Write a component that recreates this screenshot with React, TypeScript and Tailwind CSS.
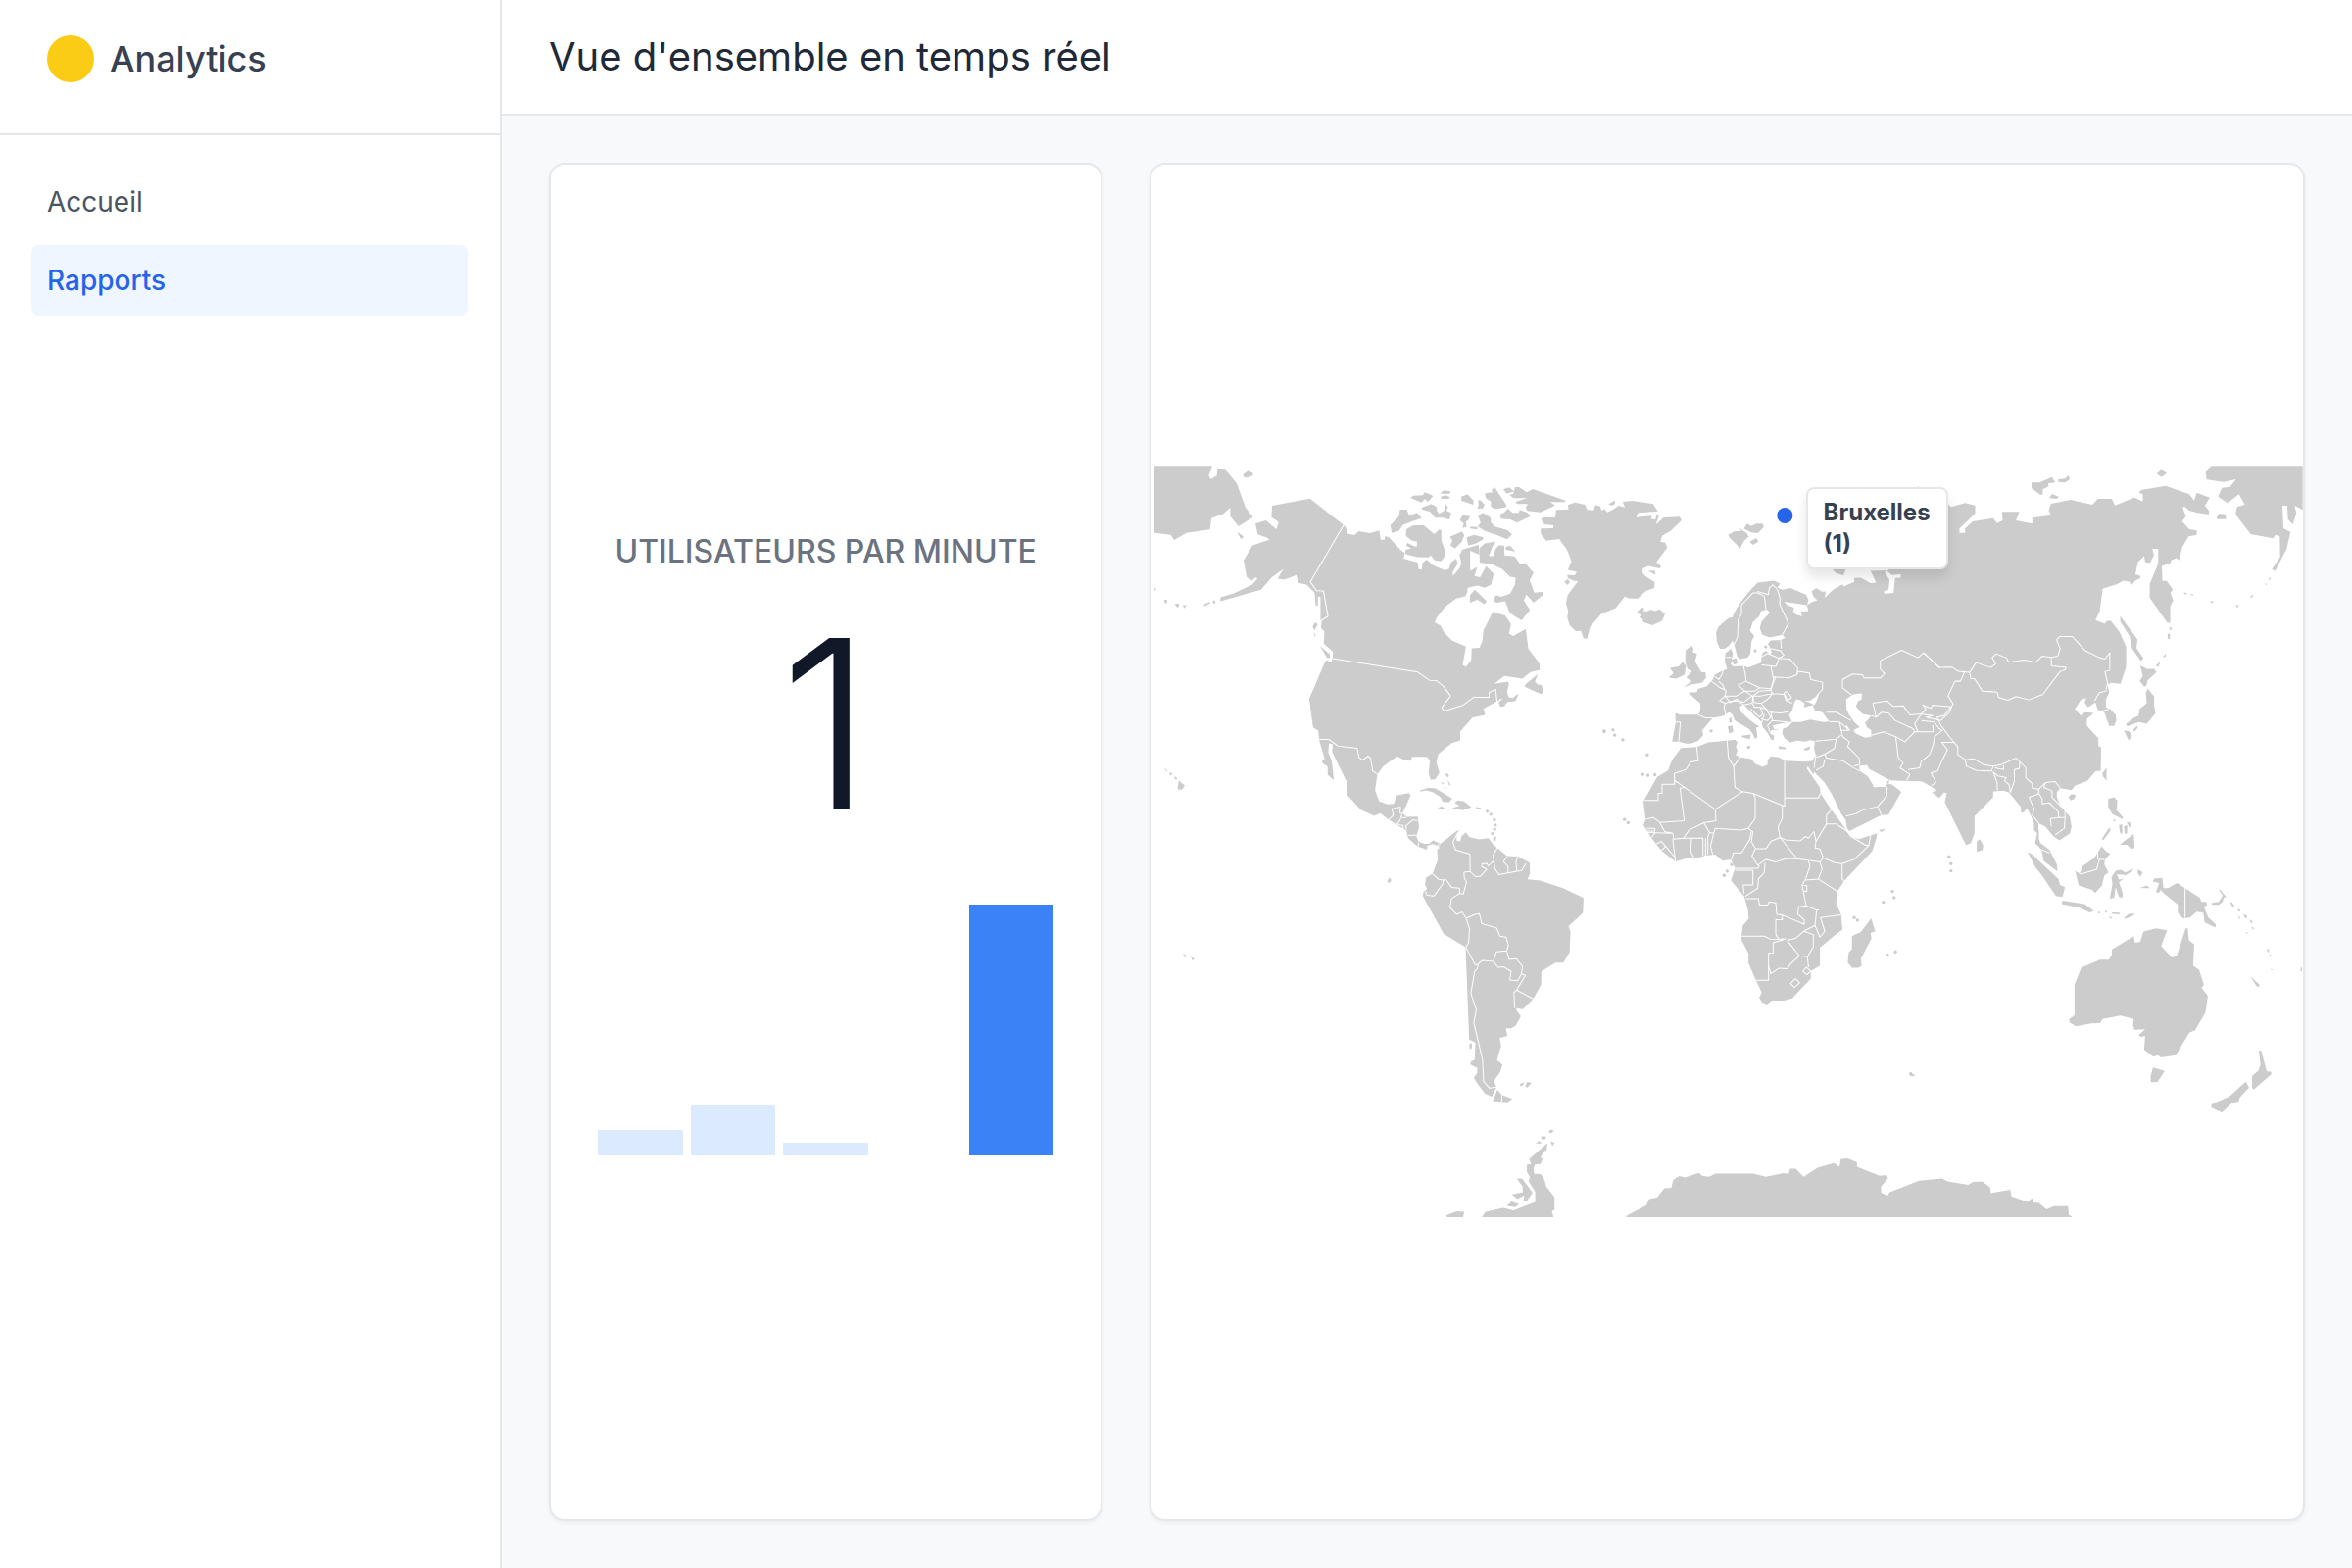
type Region = {
  name: string;
  transform: string;
  land: string[];
  water?: string;
  borders?: string;
  islets?: number[][];
};

const regions: Region[] = [
  {
    name: "alaska",
    transform: "translate(-6 -16) scale(0.33333)",
    land: [
      "M24 49L201 49L190 75L196 87L215 76L217 56L241 58L275 98L303 174L326 203L281 231L256 200V174L235 193L198 206L194 241L122 251L84 273L74 257L24 251Z",
      "M295 73L311 60L325 68V76L311 81L299 82Z",
      "M277 248L296 262L292 270L286 266Z",
      "M384 168L500 146L603 227L501 401L520 428L541 429L555 506L536 519L532 519V447L524 446V474L517 474L514 434L489 409L464 404L458 380L422 394L401 391L418 362L384 386L350 425L226 460V448L265 437L323 409L339 391L333 387L323 397L306 386L297 335L324 289L375 272L370 266L340 256L333 223L365 213L397 240L404 218L382 203Z",
      "M175 470L194 462V467L177 476ZM202 458h8v9h-6ZM110 472L123 472L115 482ZM86 468h13v8l-6 4ZM54 456h8v10h-7ZM24 419l6 5l-6 4Z",
      "M512 529L519 525L523 533L514 549L508 540ZM511 552L518 568L514 568ZM530 597L560 622L562 635L551 633L541 615Z",
      "M54 970L64 979L60 981ZM69 986L76 984L78 992L72 993ZM84 996l8 3v7l-5-1ZM98 1009L117 1024L108 1037H98L95 1034Z",
    ],
    borders: "M603 227L501 401L520 428L541 429L555 506L533 520",
  },
  {
    name: "canada",
    transform: "translate(244 -16) scale(0.33333)",
    land: [
      "M-147 227L-140 235L-134 254L-114 258L-101 246L-67 252L-38 244L-34 272L-22 272L-21 262L-9 264L26 302L40 313L36 330L80 342L82 362L92 363L94 343L107 333L126 350L163 366L175 361L181 342L197 330L202 345L186 372L188 382L208 358L213 343L207 318L220 303L234 297L240 305V367L262 355L253 383L270 387L289 353L312 376L304 409L284 419L263 412L232 419L231 434L225 445L197 452L164 477L140 507L131 525L150 535L159 554L184 580L227 599L217 655L227 661L243 641L245 604L268 603L277 583L281 549L309 493L347 504L365 530L359 559L372 567L410 545L418 606L452 651L453 670L425 677L400 697L344 689L314 713L356 706L359 712L353 736L357 753L371 756L384 745L388 746L378 766L354 768L344 782L332 783L327 770L340 757L324 762L279 789L286 806L247 815L208 856L-225 856L-240 847L-252 757L-205 657L-200 640L-185 648L-181 633L-180 615L-208 590L-206 553L-217 541L-214 520L-195 506L-208 429L-230 428L-249 401Z",
      "M57 144L66 137L95 136L101 127L127 138L114 153L109 156L102 147L91 158Z",
      "M152 127L160 121L180 124L177 131L150 131ZM149 141L165 136L177 141L175 147H153Z",
      "M92 174L121 163L138 172V183L145 193L160 184L165 163L172 172L168 184L182 190L177 210L165 208L158 205H132L118 187L93 179Z",
      "M-4 227L22 200L25 180H46L54 199L77 190L92 206L64 215L34 227L22 245L0 251Z",
      "M45 240L64 229L97 227L130 255L146 240L152 244V275L163 305V322L151 338L132 335L119 320L113 326L80 325L42 316V303L60 298L44 290L48 282L70 292L77 292V277L62 275L43 260Z",
      "M213 140L232 133L250 152V165L213 153ZM264 150L273 153L284 165L279 176L262 177L266 165Z",
      "M285 130L309 127L305 120L315 112L349 163L351 172L331 176L314 178L303 170L304 155L288 145Z",
      "M341 118L359 112L375 124L352 131Z",
      "M377 111H389L413 127L432 117L531 152L531 157L485 157L500 167L455 188L415 184L410 175L416 163L383 163L379 156L414 145L372 145L360 134L372 131Z",
      "M331 195L345 188L355 177L370 190L388 190L392 181L416 190L424 200L411 207L383 220L363 210L334 208Z",
      "M208 212L217 197L240 200L233 213L227 216L229 233L217 236L220 222ZM240 232L262 233L262 241L240 238Z",
      "M264 198L280 190L303 205V218L315 232L354 243L368 256L353 271L322 258L285 245L263 232L272 220Z",
      "M178 263L215 247L222 259L214 279L194 298L179 290L186 275Z",
      "M229 265L252 257L278 264L281 270L258 283L234 289Z",
      "M214 303L266 288L268 318L240 306L212 322Z",
      "M268 298L285 283L318 277L307 295L297 322H310L318 300L328 289L344 290L345 320L376 323L394 348L408 343L434 373L422 396L436 434L461 432L463 441L434 465L412 440L404 458L423 487L397 519L361 496L347 460L323 465L313 462L311 452L320 442L335 447L362 437L377 410L379 388L362 385L338 362L306 347L269 342Z",
      "M347 295L362 290L378 308L350 303Z",
      "M239 442L254 425L291 460L283 469L262 456L239 465Z",
      "M447 683L438 708L449 716H458L464 734L458 745L407 722L409 715Z",
      "M457 209L466 203L500 204L503 181L541 179L539 166L560 158L592 165L598 181L618 182L623 166L638 170L642 183L650 178L660 188L680 178L694 168L713 173L707 156L736 153L800 163L814 185L754 190L748 203L796 199L793 208L806 211L811 196L818 197L808 226L832 204L881 202L887 213L851 247L827 260L822 279L836 280L843 296L810 340L817 348L825 354L819 360L786 352L768 360L767 372L775 383L805 402L803 420L777 429L753 452L725 451L713 446L685 481L641 499L607 538L598 574H587L579 551L563 552L544 533L537 510L540 490L533 467L538 442L570 399L557 398L539 390L537 380L560 381L566 370L539 364L550 338L536 302L512 270L472 275L456 254V238L494 237L495 228L467 225Z",
      "M663 163L683 152L683 163L672 168ZM528 401L539 392L545 402L538 411ZM785 368L804 366L808 380Z",
      "M749 495L764 480L773 482L770 492L785 490L791 486L806 490L820 485L836 500L827 520L797 534L768 523L769 515L757 510L763 502Z",
    ],
    islets: [[650, 857], [677, 854], [682, 870], [707, 884]],
  },
  {
    name: "americas",
    transform: "translate(144 184.667) scale(0.33333)",
    land: [
      "M95 45L48 157L60 245L75 252L78 283L95 341L87 345L88 354L104 364V389L123 406L117 350L106 320L108 293L119 295L118 321L164 414V451L205 496L246 515L265 507L290 526L317 543L345 560L350 583L378 608L408 618L409 606L426 601L440 606L443 616L449 600L427 590L414 600L400 600L383 594L375 577L384 549L379 517L345 518L333 507L341 490L358 452L352 445L314 453L307 478L287 480L261 470L249 436L256 388L273 364L316 333L340 345L359 346L362 334H408L417 346L413 384L419 404L433 403L446 382L436 350L443 325L484 292L510 284L509 257L547 214L585 206L580 187L630 160L600 130L480 60L119 34L115 48Z",
      "M387 437L412 429L434 431L485 462L476 473L456 472L450 458L425 442L405 437L387 441ZM492 475L502 468L520 470L544 489L518 498L484 491L508 484ZM441 490L452 486L462 491L452 495ZM558 488L573 490V495H559Z",
      "M462 387L470 385L476 393L472 397ZM451 410L460 415L455 419ZM471 404L481 422L474 419ZM459 427L467 429L464 434ZM482 430L488 439Z",
      "M286 717L293 703L299 712L292 720ZM610 580L619 578V590L612 592Z",
      "M443 616L449 600L500 560L508 558L498 575L499 591L510 593L513 578L527 565L538 580L568 587L596 583L610 602L623 613L653 638L686 639L722 658L723 690L716 709L754 713L826 737L887 766L885 812L841 852L847 870L844 933L825 964H801L758 991L757 1031L733 1075L701 1107L684 1103L680 1108L695 1128L679 1157L665 1165L649 1165L654 1188L630 1195L635 1218L622 1262L639 1276L632 1298L612 1327L621 1345L606 1374L585 1364L561 1333L551 1316L561 1303L562 1287L540 1275L543 1266L554 1261L556 1208L537 1199L526 917L459 876L395 760L397 747L408 738L402 727L405 704L425 692L441 649L439 617Z",
      "M623 1353L637 1369L669 1381L655 1391L609 1388ZM537 1215L543 1208L545 1215V1225L539 1230ZM691 1336L707 1330L700 1340L694 1342ZM715 1329L728 1332L715 1346L708 1342Z",
    ],
    borders:
      "M119 34L380 75L415 100L438 102L458 118L480 148L453 184L461 194L517 177L551 152H598V138L618 128L622 165M78 281H108L135 301L194 308L200 337L211 344L228 332L235 338L242 378L257 388M300 493L327 488L325 505L332 507M300 493L305 513L290 527M332 507L328 520H345M328 523L315 543M318 540L335 545V555M345 557L343 545L365 527L379 530M350 574H375M383 597L380 608M443 600V616M506 560L487 594L495 619L539 632L540 685L555 700H571L591 678L576 670V661L591 660L595 668L613 652L610 635L623 613M613 652L615 675L628 695L683 684L697 683L711 660M653 640L642 655L656 670V688M686 639L680 655L683 684M540 685L521 687L522 705L529 717L519 754L508 752L507 736L484 734L466 710L457 711L443 709L425 692M457 711V722L429 760L408 758L403 745M508 752L483 768L478 795L498 816L515 809L528 828L538 860L535 903L527 917M528 828L553 817L568 814L576 845L621 858L631 883L650 886L657 910L652 928L620 931L611 960L577 957L564 969L555 970L527 917M652 928L659 954L682 952L700 976L697 998L709 1003L682 1048L674 1055L676 1103M611 960L625 978L643 977L665 990L661 1017L685 1019L697 998M682 1048L733 1075M564 969L562 982L554 990L542 1058L559 1108L551 1147L578 1262L581 1327L599 1348L621 1345M637 1369V1390",
    islets: [[592, 501], [603, 510], [614, 527], [617, 543], [615, 556], [608, 569], [950, 257]],
  },
  {
    name: "europe",
    transform: "translate(484 4) scale(0.33333)",
    land: [
      "M179 550L198 537L203 546L201 556L214 561L208 584L223 610L228 618H240L242 634L229 650L196 655L173 663L198 645L181 634L199 614L185 608L178 585Z",
      "M127 634L142 620L131 604L158 600L170 586L180 597L176 625L150 637Z",
      "M147 745L152 743L160 747L217 747L224 737V713L187 680L213 678L217 668L243 661L262 640L268 625L294 612L306 608L299 583L301 560L318 545L324 560L320 575L323 583L317 592L325 600L356 598L369 603L381 600L411 588V572L415 558L425 552L437 562L443 558L436 540L431 530L440 520L470 519L484 512L475 503L437 511L413 502L406 482L412 462L437 435L428 426L410 430L404 447L385 463L376 490L389 507L381 522L377 560L369 573L345 577L337 570L331 545L323 520L313 535L298 546H284L275 525L272 497L279 479L310 452L322 450L330 432L347 404L381 362L400 343L450 337L468 346L460 358L474 365L500 360L547 380L555 395L551 412L481 402L490 412L511 420L508 430L515 440L535 447L532 432L555 430L550 412L568 402L582 397L570 385L565 370L578 360L597 371L608 370L605 390L630 365L660 348L661 355L696 341L694 329L715 328L745 345L762 343L745 307L1080 300V952H868L840 982L800 1053L778 1055L680 1103L673 1095L669 1070L655 1050L627 992L604 955L575 925L565 892L577 870L572 850L575 828L560 825L545 830L520 827L500 832L482 820L475 805L477 790L494 783L507 768L495 770L470 775L445 780L452 796L466 790L440 795L437 805L450 812L448 826L440 822L431 805L415 785L412 770L390 750L370 730L357 717L345 722L348 738L378 765L405 785L395 787L399 815L392 822L384 805L372 790L330 765L321 745L312 740L296 750L264 757L255 765L230 795L233 810L216 828L195 836L180 836L158 830H138L143 800L149 770Z",
      "M350 812L378 808L376 822L352 816ZM308 783L322 780L325 800L312 805ZM312 760L319 755L321 770L314 773ZM462 843L487 848L485 853L465 852ZM540 852L562 843L556 855L545 857ZM322 578L335 575L338 590L326 595Z",
      "M309 197L328 187L350 185L340 175L366 192L372 203L358 215L345 240L336 228L315 208ZM357 178L368 163L380 170L395 163L414 163L419 173L400 192L380 190ZM375 218L395 207L402 218L385 228ZM625 300H670L662 321L640 315ZM882 54L890 49L900 54Z",
    ],
    water:
      "M505 770L495 748L505 735L511 712L518 700L530 703L543 712L541 725L568 718L575 735L598 740L618 768L600 770L560 762L530 770ZM543 706L560 704L587 686L580 705L573 718L555 708ZM670 700L692 685L718 682V700L707 706L700 722L712 735L720 745L747 750L735 765L728 770L733 785L747 795L747 815L728 818L700 805L692 795L712 785L695 770L678 745L671 730ZM795 307L810 320L837 318V328L820 330L815 375L787 377L785 370L800 365L803 335L788 310ZM710 903L735 902L740 913L780 935L806 948L840 950L900 952L840 984L812 962L800 958L803 946L795 952L790 965L757 970L742 945L735 935L712 920Z",
    borders:
      "M217 747L240 757L264 757M149 770H163L158 830M258 645L285 665L303 673L300 690L283 705L300 712L297 725L302 748M268 630L280 640L290 625L294 612M280 645L292 655L300 673M303 572H318M356 598L362 625L364 645L340 657L360 675L335 690L310 690L300 690L315 710L335 700L355 710L383 690L360 675M300 712L320 706L335 705L357 717L383 712L385 690M364 645L385 655L405 665L390 675L360 675M405 665L440 668L448 640L440 598L411 595M385 690L405 675L440 672L445 683L410 690L385 690L388 710L410 713L430 700L445 683L480 685L487 705L505 712M410 713L425 730L440 740L470 742L495 738M480 680L490 677L503 695L492 705L480 680M448 632L495 635L520 625L523 615L558 620L562 640L598 648V670L580 690M440 672L445 655L455 632M440 598L455 600L465 575L498 577L522 605L520 625M412 570L430 560L465 575M438 545L470 552L480 565L465 575M470 519L472 545M383 712L390 725L408 725L415 745L405 755L378 730M408 725L425 730L440 755L430 765L410 760M440 740L445 765L430 780L437 800M445 765L490 770M420 745L412 770M326 535L338 510L340 455L350 440L350 412L385 375L398 375L420 385L425 425M398 370L432 380L435 360L447 350L460 365L468 390L467 410L494 468L475 503M687 687L659 665V640L690 623L720 625L725 635L775 635L788 622L775 608V582L840 550L890 573L907 558L957 604M610 740L640 740L685 765M618 768L650 770L680 795M650 770L655 795L680 795L670 780M655 795L660 815L680 830L675 845L710 880L712 900M577 828L640 822L655 810M640 822L635 850L605 868L580 878M605 868L610 880L660 888L695 912M605 885L600 905L578 918M695 905L710 900M697 912L712 920M578 870L572 910M752 966L788 967L798 955M795 968V995L767 1028L720 1040L700 1050L669 1058M767 1028L778 1055M762 755L752 712L795 705L815 722L845 720L865 748L900 745M747 750L762 755L778 740L800 742L820 765L875 790L880 800M747 810L785 800L822 815L850 830L880 800L937 800M822 815L830 880L845 895L835 910L865 930L855 950M860 915L895 910L900 890L925 870L937 840L940 815L965 795M900 745L915 730L905 718L930 728L935 718L993 723L985 742L960 765L915 755L935 750L900 745L880 775L890 800M900 765L940 770L955 790L965 795M937 800L935 780M1000 832H963L980 855L965 885L950 920L930 925L945 955L930 965",
    islets: [[257, 797], [372, 847], [392, 552], [424, 540], [62, 870], [48, 930], [64, 933], [85, 931]],
  },
  {
    name: "africa",
    transform: "translate(484 244) scale(0.33333)",
    land: [
      "M165 129L213 126L248 112L306 107L330 104L338 112L333 125L338 138L332 150L350 158L380 163L392 177L415 187L430 180V165L440 155L465 158L483 168L545 171L568 168L577 195L570 210L553 185L550 192L590 250L592 268L625 318L660 365L665 373L682 400L710 408L765 390L763 405L750 445L665 535L642 570L640 605L655 640L659 685L632 705L590 740L590 795L562 812V835L505 895L480 902H443L428 914L413 907L404 893L412 878L390 830L371 787L372 758L350 717V705L354 673L372 652L370 625L358 583L318 535L328 503L331 497L325 485L318 470L292 474L270 455L240 458L205 469L190 464L148 477L105 443L75 405L50 365L57 350L50 293L92 218L125 198L138 165Z",
      "M747 650L759 690L745 695L748 712L715 775L718 795L708 802H688L675 785L678 755L688 745V705L715 692Z",
      "M770 380L792 376L778 386ZM862 1124L870 1120L874 1127L882 1130L876 1134L866 1133Z",
    ],
    borders:
      "M213 126L218 168L195 172L180 195L145 207V240H107V268H95V290H52M145 228L270 317L353 263L330 250L326 185L310 160L306 107M326 185L348 155M162 252L178 250M162 252L175 352L100 357L80 342L57 347M270 317L272 352L235 358L190 380L172 405L143 408L140 390L60 388M235 358L252 388L265 390L270 375L350 380L370 375L392 345V280L385 268L353 263M385 268L480 307M482 168V307H475V345L462 370L468 403L440 415L425 437H393L380 415L385 385L370 375M482 282H585L592 268M380 385L375 410L350 450H325L320 470M393 437L382 460L400 488L425 470L455 478L485 468L520 468L590 478M468 403L520 468M468 403L485 410L530 413L545 400L555 405L572 385L578 415L575 435L590 438L600 465L590 478L597 500L585 530L642 567M578 415L610 362H640L660 375L680 390L685 400L730 427H740L695 470L658 483L635 480L600 465M610 362V335L625 318M745 395L740 427M658 483V530L665 537M585 530L545 533L560 490L555 475M545 533L535 548L548 612L525 615L522 637L542 655V668L475 640L458 638L455 603L435 600L430 610H405L402 590H362M535 550H550V568H538M362 583L400 558L402 530L420 510L422 480M330 503L385 503V548H355L358 575M331 497L400 497L405 488M475 640V655H455V700L463 712M350 705H420L440 715L485 713L447 725V757H433V840H395M433 795L440 820L465 803L490 805L500 790L527 765L490 718L515 712L540 690L570 700V738L552 768L527 765M552 768L555 800M540 690L575 672L580 625L548 612M580 625H587M575 672L590 708L605 690L592 648L655 640M500 850L515 835L528 848L512 862ZM538 812L548 800L562 812L550 823ZM60 375H85V383H60M80 342L100 357L115 385L140 390M140 408L143 435L148 477M75 403L85 390M85 425L105 415L118 430L148 465M105 443L118 430M197 403L195 445L205 469M172 405H232V458M240 405V458M252 388L247 400V455M265 390L255 430L262 455",
    islets: [[812, 568], [817, 587], [784, 601], [695, 648], [705, 656], [797, 763], [821, 753], [320, 486], [306, 506], [297, 519], [3, 358], [-8, 348]],
  },
  {
    name: "siberia",
    transform: "translate(784 -16) scale(0.33333)",
    land: [
      "M60 140L91 172L134 160L165 167V192L117 238V251H134V238L158 216L220 206L232 221L249 213L247 187H300L290 213L340 223V205L397 197L390 182L397 162L457 150L524 165L540 147H583L593 167L652 143L678 155V133L666 128L672 120L748 107L820 133L835 152L843 128L883 143L868 168L880 183V195L845 190L820 183L805 170L800 175L810 200L798 216L820 240L843 244V257L818 262L798 295L790 335L780 328L765 335L762 345L736 352L738 398L751 398L770 425L762 435L771 457L762 475V527L752 525L699 450V408L725 345V300H707L712 320L700 343L685 340L682 322L663 340L655 378L670 382V390L655 397L642 412L637 400L618 397L600 408L555 422L546 492L533 518L562 529L567 520L580 520L607 555L627 600V660L610 713L580 710L570 715L575 740L565 760V785L578 790L595 808L597 825L590 842H575L560 800L550 795L540 793L533 770L510 785L500 770L505 757L490 760L470 790L490 812L500 800L528 802L507 820L506 845L542 880V905L549 907L550 940L549 980H50L0 860L-100 700V300L60 200Z",
      "M609 505L662 578L658 603L680 635L672 643L645 605L638 568L609 522Z",
      "M670 657L692 668L712 667L720 677L692 703L690 716L683 722L668 705L678 690ZM693 728L713 752L712 775L717 803L690 835L665 830L630 843L627 835L650 817L665 810L668 790L690 772L687 740ZM648 855L660 840L662 848L652 860ZM620 855L637 858L645 872L635 887Z",
      "M718 657L733 643L725 662ZM738 633L748 620V630ZM754 560h7v15h-7ZM758 540l10 2-6 9ZM803 432l12 6-8 2ZM822 438l12 2-4 4ZM883 460h12l-5 7ZM962 472h10l-5 9ZM1005 448L1018 438L1012 450ZM1052 405l6 2-3 4ZM1062 393l6-8v12Z",
      "M337 97L362 97L400 80L410 97L388 100L390 108L372 118V133L365 135L338 115ZM418 88L440 85L450 75L455 87L440 97L420 95ZM392 145L400 132L420 140L415 147ZM720 70L735 58L752 68L735 80ZM904 203L912 192L932 195V209H905Z",
      "M888 49H1167V180L1142 168L1148 190L1137 225L1122 210L1120 168H1105L1108 237L1130 248L1118 300L1083 368L1073 362L1098 325L1097 262L1083 257L1077 268L1008 255L962 195L966 172L990 165L972 133L937 160L908 140L920 113L945 110L963 87L925 95L873 88L870 65Z",
    ],
    borders:
      "M148 678L168 648L212 663L228 652L217 633L229 621L260 633L268 647L315 640L350 647L370 628L398 632V658L443 663L440 670L425 675L372 745L330 762L290 752L265 763L237 755L232 738L187 735L163 697H152ZM398 632L418 628L425 605L414 578L424 568H462L500 610L545 633L562 637L577 618V672L562 675L570 710L565 735L545 740L530 765M8 618L55 663L95 662L113 675L148 678M555 795L575 790",
  },
  {
    name: "asia",
    transform: "translate(724 204) scale(0.33333)",
    land: [
      "M82 347L133 352L180 350L210 368L228 378L213 385L235 402L250 385L258 388L252 415L317 547L332 540L343 510V458L400 400V383L430 380L448 385L485 430V447L495 445L503 433L515 455L525 480V500L535 510L528 540L548 560L555 595L590 622L597 626L595 605L572 560L545 540L540 528V480L560 490L585 520L603 532L635 510L640 490L635 460L605 425L595 400V385L605 372L640 378L650 365L688 350L718 315L730 270L729 247L718 240L722 220L686 180L600 100L82 100Z",
      "M630 400L640 390L653 393L648 405L638 410ZM735 325L747 310V350L735 335ZM350 535L360 528L370 548L367 562L350 567Z",
      "M505 567L520 575L600 650L605 668L620 675L612 705L592 702L550 640L530 615ZM612 716L680 727L708 748L695 752L665 738L610 727Z",
      "M651 625L665 632L675 610L710 585L732 550L745 565L758 573L742 590L740 605L753 630L740 640L733 670L712 693L703 683L662 670Z",
      "M757 710L765 665L762 645L775 625L790 622L805 630L828 618L825 627L805 638L778 635L785 652L800 648L785 660L797 695L795 708L785 705L775 675L770 708Z",
      "M752 405L770 400L780 410L778 440L798 462L795 467L765 452L752 430ZM732 528L755 493L760 500L738 530ZM785 485L795 483V512L788 508ZM800 490L810 485V510L803 512ZM808 475L820 478V492L815 490ZM768 465L775 472L770 475ZM788 545L800 535L830 512L833 555L822 558L810 545Z",
      "M843 620L858 630L850 643L842 632ZM850 677L870 670L880 678L860 678ZM720 749L730 752L722 756ZM742 746L750 750L743 754ZM753 764L765 768L760 772ZM762 752L788 753L785 758L765 757ZM800 770L815 757L833 756L830 761L805 772Z",
    ],
    borders:
      "M313 15L300 45H283L262 90L278 115L250 150L228 155L240 180L270 220L292 245V270L315 285L340 282L370 300L400 305L425 300L470 280L482 292L500 310V340L520 358V372L540 375L560 355L590 352L605 372M315 285L318 305L350 318L395 320L400 305M405 310L432 315V303M400 322L412 355L413 380M400 322L415 335L440 340L435 350L448 360L453 385L465 350V315L480 312L482 292M540 375L538 390L510 400L525 435L520 455L540 480V500M538 385L550 405V420L572 417L600 445V462L575 465L578 490M560 355L555 370L580 380V400L620 440V462H600M620 462L618 495L590 515M548 560L572 570M655 625L668 635L717 620L725 590L740 590M720 570V590",
    islets: [[265, 582], [271, 603], [271, 625]],
  },
  {
    name: "oceania",
    transform: "translate(884 324) scale(0.33333)",
    land: [
      "M419 441L452 447L434 496L467 530L482 525L509 441H515L519 478L535 490L532 556L550 568L565 615L557 622L577 648L570 697L538 753L520 760L479 829L433 836L425 829L410 834L382 813L385 770L372 773L365 768L385 750L352 751L348 738L350 718L310 708L255 718L247 731L220 732L173 741L153 728V718L169 707V613L190 561L247 537H274L283 523V506L350 465L354 485L370 482L380 451Z",
      "M409 867L445 877L423 911L402 912V893ZM733 815H740L757 878L771 880V888L717 934L712 928V893L732 876L738 858ZM693 910L703 928L675 958L671 971L652 975L620 1005L588 990V980L643 955Z",
      "M407 297L415 288L438 287L441 318L455 318L483 302L552 347L557 360H572L575 370L565 375L578 407L602 430L600 438L567 423L563 393L543 390L522 408L500 410L485 393V368L441 333L432 323L427 333L418 330L428 303Z",
      "M588 364L610 360L620 345L622 340L610 323L615 323L633 345L625 348L622 360L610 369H590ZM645 360L652 362L659 375L652 376ZM668 381l8 4v5l-6-2ZM671 402l7 9-6 0ZM685 397l12 6v7l-8-3ZM705 413l8 7v5l-6-1ZM709 438h8v8ZM691 454h7v6ZM757 503l8 4-4 10ZM764 519l8 5h-5ZM770 565l7 4h-6ZM707 588L735 613V620L725 617ZM862 560h3v12h-5Z",
    ],
    borders: "M507 318V408",
  },
  {
    name: "polynesia",
    transform: "translate(0 0)",
    land: ["M31 497L35 499L33 501ZM39 500L43 502L41 504Z"],
  },
  {
    name: "antarctica",
    transform: "translate(264 654) scale(0.44643 0.33333)",
    land: [
      "M491 335V331L537 298L543 279L561 275L578 246L594 245L598 221L612 209L625 213L657 199L665 209L680 211L695 201H781L810 211L850 200L862 202L865 186H878L896 211L928 183L965 169L978 180L981 157L997 155L1018 167V180L1070 208L1085 206L1089 215L1073 241V260L1088 269L1093 258L1160 223L1212 216L1225 225L1272 236L1283 227L1304 225L1322 243L1324 261L1368 251L1371 271L1408 288L1418 276L1421 290L1434 291L1451 311L1468 301H1500L1502 328L1511 335Z",
      "M161 335L169 319L209 306L234 314L283 288V257L268 225L271 212L264 197V174L274 172L269 157L311 108L309 130L302 134L295 153L300 156L295 172L283 173L279 185L281 203L295 202L304 220L308 241L327 273V312L321 317L325 335Z",
      "M241 217L253 216L277 260L263 287L256 283L258 268L242 279L230 265L255 258L254 240ZM218 300L229 287L246 295L237 304ZM80 329L104 317L121 318L118 335H82ZM313 73L319 66L326 69L319 78ZM297 87h10v9h-10ZM284 109L292 101L298 109ZM318 102L327 107L322 117Z",
    ],
  },
];

const WorldMap = () => {
  return (
    <svg viewBox="-1 0 1174 766" className="block w-full" role="img" aria-label="Carte du monde">
      {regions.map((region) => (
        <g key={region.name} transform={region.transform} fill="#cccccc">
          {region.land.map((d) => (
            <path key={d} d={d} />
          ))}
          {region.islets?.map(([x, y]) => (
            <circle key={`${x}-${y}`} cx={x} cy={y} r="5" />
          ))}
        </g>
      ))}
      {regions.map((region) => (
        <g key={region.name} transform={region.transform}>
          {region.water && <path d={region.water} fill="#ffffff" />}
          {region.borders && (
            <path d={region.borders} fill="none" stroke="#ffffff" strokeWidth="3" strokeLinejoin="round" />
          )}
        </g>
      ))}
      <circle cx="645" cy="50" r="8" fill="#2563eb" />
    </svg>
  );
};

const navItems = [
  { label: "Accueil", active: false },
  { label: "Rapports", active: true },
];

const Sidebar = () => {
  return (
    <aside className="w-[512px] shrink-0 border-r-2 border-[#e5e7eb] bg-white">
      <div className="flex items-center gap-4 border-b-2 border-[#e5e7eb] px-12 pt-8 pb-12">
        <span className="size-12 rounded-full bg-[#facc15]" />
        <span className="text-[36px] leading-[56px] font-medium text-[#374151]">Analytics</span>
      </div>
      <nav className="flex flex-col gap-2 p-8">
        {navItems.map((item) => (
          <a
            key={item.label}
            href="#"
            className={
              item.active
                ? "rounded-lg bg-[#eff6ff] p-4 text-[28px] leading-[40px] font-medium text-[#2563eb]"
                : "rounded-lg p-4 text-[28px] leading-[40px] text-[#4b5563]"
            }
          >
            {item.label}
          </a>
        ))}
      </nav>
    </aside>
  );
};

const bars = [10, 20, 5, 0, 100];

const UsersCard = () => {
  return (
    <section className="flex flex-col justify-center rounded-2xl border-2 border-[#e5e7eb] bg-white p-12 shadow-[0_2px_4px_rgba(0,0,0,0.05)]">
      <h2 className="text-center text-[32px] leading-[48px] font-medium whitespace-nowrap text-[#6b7280]">
        UTILISATEURS PAR MINUTE
      </h2>
      <p className="mt-8 text-center text-[240px] leading-none font-light text-[#111827]">1</p>
      <div className="mt-16 flex h-64 items-end gap-2">
        {bars.map((value, i) => (
          <div
            key={i}
            className={i === bars.length - 1 ? "flex-1 bg-[#3b82f6]" : "flex-1 bg-[#dbeafe]"}
            style={{ height: `${value}%` }}
          />
        ))}
      </div>
    </section>
  );
};

const MapCard = () => {
  return (
    <section className="col-span-2 flex flex-col justify-center rounded-2xl border-2 border-[#e5e7eb] bg-white shadow-[0_2px_4px_rgba(0,0,0,0.05)]">
      <div className="relative">
        <WorldMap />
        <div className="absolute top-[2.8%] left-[56.8%] rounded-lg border-2 border-[#e5e7eb] bg-white px-4 py-2 text-[24px] leading-[32px] font-bold text-[#374151] shadow-[0_8px_12px_rgba(0,0,0,0.1)]">
          Bruxelles
          <br />
          (1)
        </div>
      </div>
    </section>
  );
};

export default function App() {
  return (
    <div className="flex min-h-screen bg-[#f8f9fb] font-[Inter,sans-serif]">
      <Sidebar />
      <div className="flex min-w-0 flex-1 flex-col">
        <header className="flex h-[118px] items-center border-b-2 border-[#e5e7eb] bg-white px-12">
          <h1 className="text-[40px] leading-[56px] text-[#1f2937]">Vue d'ensemble en temps réel</h1>
        </header>
        <main className="grid flex-1 grid-cols-3 gap-12 p-12">
          <UsersCard />
          <MapCard />
        </main>
      </div>
    </div>
  );
}
